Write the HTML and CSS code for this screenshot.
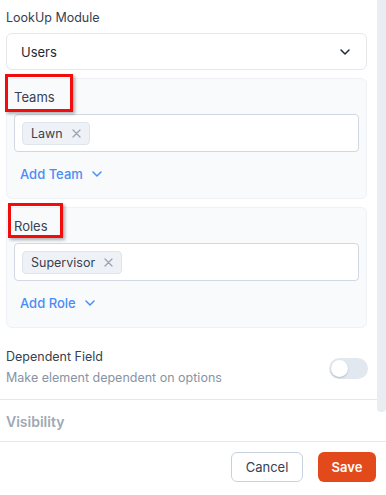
FILE: index.html
```html
<!DOCTYPE html>
<html>
<head>
    <title>Field Settings</title>
    <link rel="stylesheet" href="styles.css">
</head>
<body>
    <div class="scroll-area">
        <div class="content">
            <div class="field-label">LookUp Module</div>
            <div class="select">
                <span>Users</span>
                <svg width="10" height="6" viewBox="0 0 10 6"><path d="M1 1l4 4 4-4" fill="none" stroke="#1f2937" stroke-width="1.5" stroke-linecap="round" stroke-linejoin="round"/></svg>
            </div>

            <div class="card">
                <div class="highlight teams-mark"></div>
                <div class="card-label">Teams</div>
                <div class="tag-input">
                    <span class="chip">Lawn
                        <svg width="9" height="9" viewBox="0 0 9 9"><path d="M1 1l7 7M8 1l-7 7" stroke="#9aa3af" stroke-width="1.3" stroke-linecap="round"/></svg>
                    </span>
                </div>
                <div class="add-link">Add Team
                    <svg width="10" height="6" viewBox="0 0 10 6"><path d="M1 1l4 4 4-4" fill="none" stroke="#4b8df5" stroke-width="1.5" stroke-linecap="round" stroke-linejoin="round"/></svg>
                </div>
            </div>

            <div class="card">
                <div class="highlight roles-mark"></div>
                <div class="card-label">Roles</div>
                <div class="tag-input">
                    <span class="chip">Supervisor
                        <svg width="9" height="9" viewBox="0 0 9 9"><path d="M1 1l7 7M8 1l-7 7" stroke="#9aa3af" stroke-width="1.3" stroke-linecap="round"/></svg>
                    </span>
                </div>
                <div class="add-link">Add Role
                    <svg width="10" height="6" viewBox="0 0 10 6"><path d="M1 1l4 4 4-4" fill="none" stroke="#4b8df5" stroke-width="1.5" stroke-linecap="round" stroke-linejoin="round"/></svg>
                </div>
            </div>

            <div class="dependent">
                <div>
                    <div class="dep-title">Dependent Field</div>
                    <div class="dep-sub">Make element dependent on options</div>
                </div>
                <div class="toggle"><div class="knob"></div></div>
            </div>
            <div class="section-title">Visibility</div>
        </div>
        <div class="scrollbar"><div class="thumb"></div></div>
    </div>
    <div class="footer">
        <button class="btn btn-cancel">Cancel</button>
        <button class="btn btn-save">Save</button>
    </div>
</body>
</html>
```

FILE: styles.css
```css
body {
  margin: 0;
  font-family: Inter, "Noto Sans", sans-serif;
  font-size: 12.5px;
  color: #374151;
  background: #fff;
}

.scroll-area {
  display: flex;
  height: 441px;
  overflow: hidden;
}

.content {
  width: 377px;
  box-sizing: border-box;
  padding: 8px 10px 0 6px;
}

.scrollbar {
  width: 9px;
}

.thumb {
  height: 412px;
  background: #e9ecf1;
  border-radius: 0 0 4px 4px;
}

.field-label {
  line-height: 20px;
  color: #374151;
}

.select {
  margin-top: 5px;
  height: 37px;
  box-sizing: border-box;
  border: 1px solid #e5e7eb;
  border-radius: 6px;
  display: flex;
  align-items: center;
  justify-content: space-between;
  padding: 0 16px 0 14px;
  color: #1f2937;
  font-size: 13px;
}

.card {
  position: relative;
  margin-top: 8px;
  background: #f8fafc;
  border: 1px solid #eef1f5;
  border-radius: 6px;
  padding: 8px 7px 14px 7px;
}

.card-label {
  line-height: 20px;
  color: #374151;
  font-size: 13px;
}

.tag-input {
  margin-top: 7px;
  height: 38px;
  box-sizing: border-box;
  background: #fff;
  border: 1px solid #cfd8e3;
  border-radius: 4px;
  padding: 0 7px;
  display: flex;
  align-items: center;
}

.chip {
  height: 23px;
  box-sizing: border-box;
  display: inline-flex;
  align-items: center;
  gap: 9px;
  padding: 0 8px 0 8px;
  background: #eef2f7;
  border: 1px solid #dfe5ec;
  border-radius: 4px;
  color: #374151;
  font-size: 12.5px;
}

.add-link {
  margin-top: 12px;
  line-height: 20px;
  padding-left: 6px;
  color: #4b8df5;
  font-weight: 500;
  font-size: 13px;
  display: flex;
  align-items: center;
  gap: 9px;
}

.highlight {
  position: absolute;
  border: 3px solid #f20d0d;
  box-shadow: 2px 2px 3px rgba(0, 0, 0, 0.3);
}

.teams-mark {
  left: -2px;
  top: -5px;
  width: 62px;
  height: 32px;
}

.roles-mark {
  left: 1px;
  top: -5px;
  width: 49px;
  height: 29px;
}

.dependent {
  margin-top: 19px;
  display: flex;
  align-items: center;
  justify-content: space-between;
  padding-bottom: 10px;
  margin-right: -10px;
  margin-left: -6px;
  padding-left: 6px;
  padding-right: 9px;
  border-bottom: 1px solid #e3e8ef;
}

.dep-title {
  line-height: 20px;
  color: #374151;
}

.dep-sub {
  line-height: 22px;
  color: #8893a5;
}

.toggle {
  width: 39px;
  height: 21px;
  border-radius: 11px;
  background: #e2e8f0;
  position: relative;
}

.knob {
  position: absolute;
  left: 2px;
  top: 2px;
  width: 17px;
  height: 17px;
  border-radius: 50%;
  background: #fff;
  box-shadow: 0 1px 2px rgba(0, 0, 0, 0.2);
}

.section-title {
  margin-top: 12px;
  line-height: 20px;
  font-size: 14px;
  font-weight: 600;
  color: #a0a8b5;
}

.footer {
  border-top: 1px solid #e3e8ef;
  display: flex;
  justify-content: flex-end;
  gap: 15px;
  padding: 10px 10px 0 0;
}

.btn {
  height: 30px;
  border-radius: 6px;
  font-family: Inter, "Noto Sans", sans-serif;
  font-size: 13px;
  cursor: pointer;
}

.btn-cancel {
  width: 72px;
  background: #fff;
  border: 1px solid #c8d2de;
  color: #374151;
}

.btn-save {
  width: 58px;
  background: #e34a1b;
  border: none;
  color: #fff;
  font-weight: 600;
}
```
